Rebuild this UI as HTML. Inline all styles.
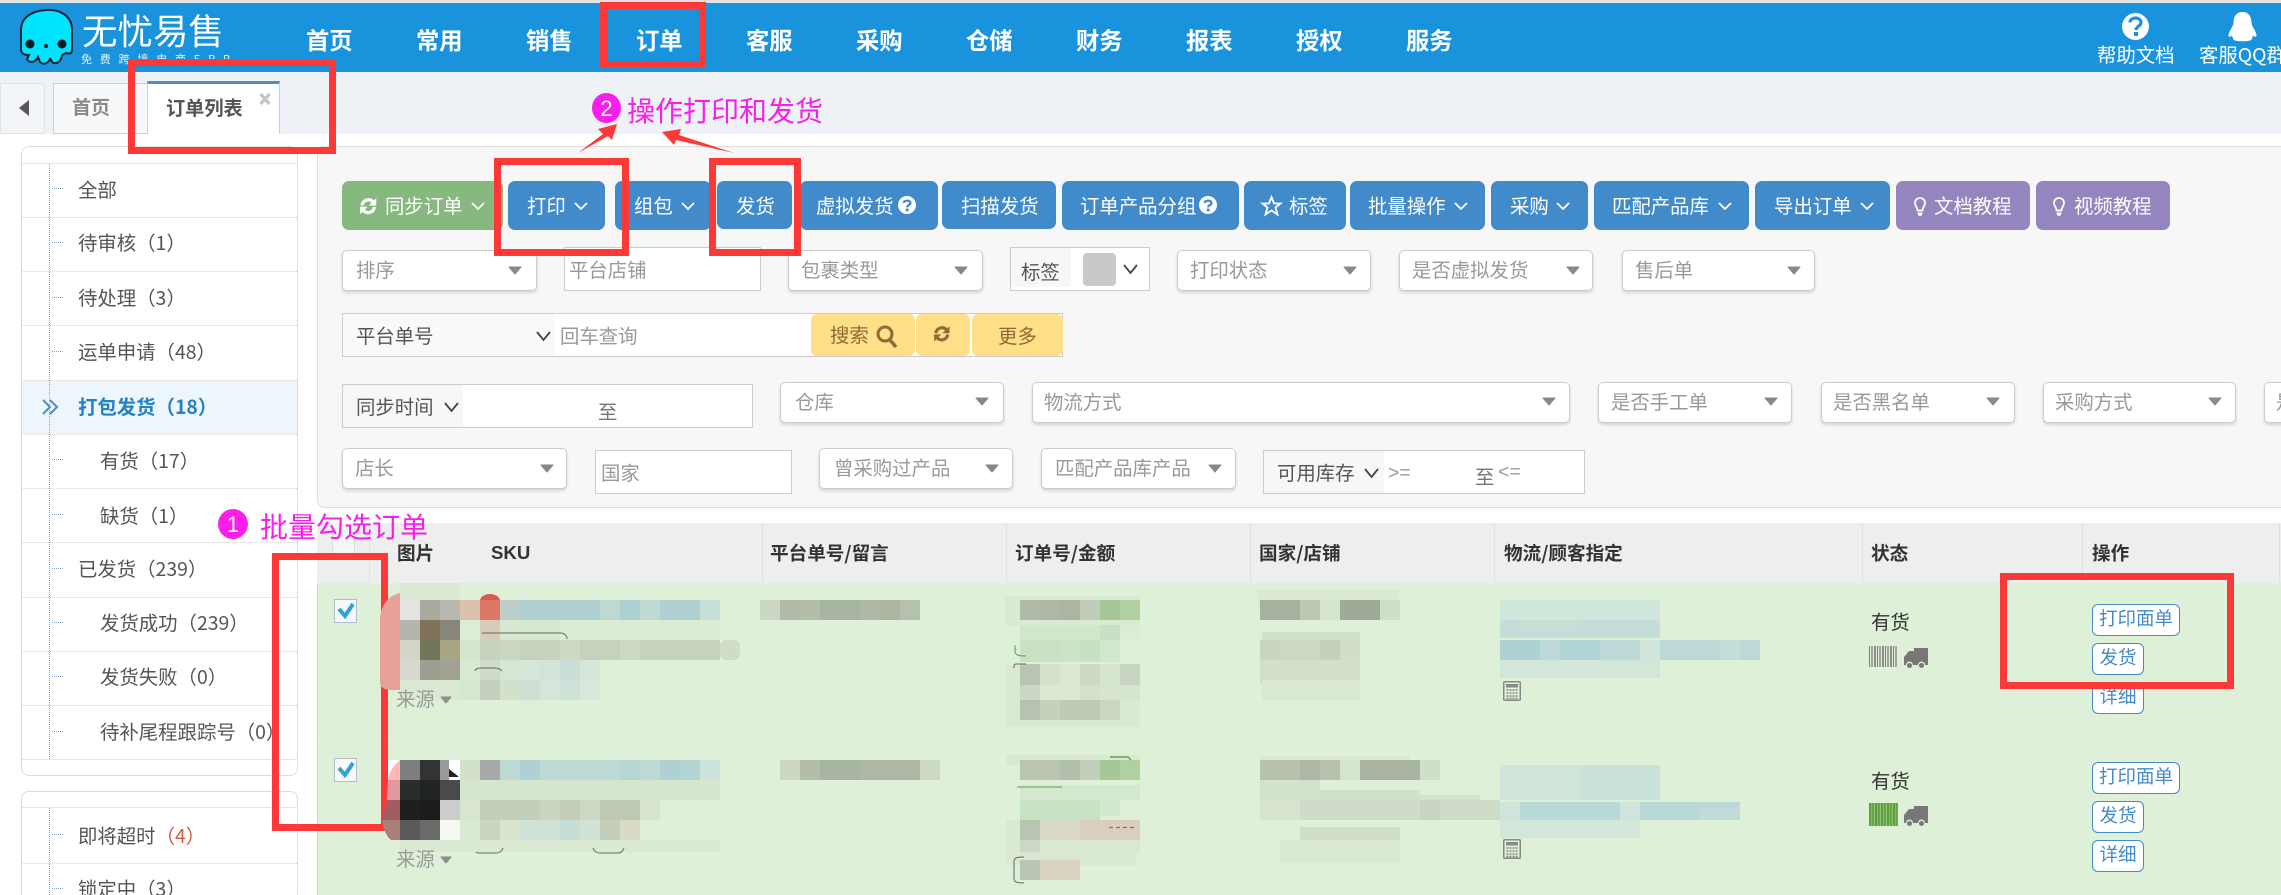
<!DOCTYPE html>
<html lang="zh-CN"><head><meta charset="utf-8"><title>订单列表</title>
<style>
html,body{margin:0;padding:0;width:2281px;height:895px;overflow:hidden;background:#fff}
body{position:relative;font-family:"Liberation Sans","Noto Sans CJK SC",sans-serif;font-size:19.4px;color:#555}
div,span{box-sizing:border-box}
.a{position:absolute}
.t{position:absolute;white-space:nowrap;line-height:20px;margin-top:-1px;font-family:"Noto Sans CJK SC","Liberation Sans",sans-serif}
.t .t{margin-top:0}
.n{position:absolute;top:26px;line-height:26px;font-size:23.3px;color:#fff;font-weight:700;font-family:"Noto Sans CJK SC",sans-serif;white-space:nowrap}
.b{position:absolute;top:181px;height:49px;border-radius:7px;background:#428bca}
.w{color:#fff;top:196px}
.s{position:absolute;height:41px;background:#fff;border:1px solid #ccc;border-radius:5px;box-shadow:0 2px 3px rgba(0,0,0,.14)}
.g{color:#999}
.i{position:absolute;background:#fff;border:1px solid #ccc}
.l{position:absolute;background:#f7f7f7}
.y{position:absolute;top:314px;height:42px;background:#ffdf87;border-radius:6px}
.br{color:#8f6a34}
.h{color:#333;font-weight:700;top:544px;font-size:18.6px}
.d{position:absolute;left:22px;width:275px;height:0;border-top:1px dotted #d2d2d2}
.sd{position:absolute;left:52px;width:11px;height:0;border-top:1px dotted #7ea8cc}
.v{position:absolute;top:523px;width:1px;height:60px;background:#e0e0e0}
.o{position:absolute;left:2092px;height:32px;width:52px;background:#fff;border:1.5px solid #428bca;border-radius:6px;color:#428bca;text-align:center;font-size:18.5px;line-height:27px;font-family:"Noto Sans CJK SC",sans-serif;white-space:nowrap}
.c{position:absolute;left:334px;width:23px;height:24px;background:#f6f8fd;border:1.5px solid #b4bccb}
</style></head><body>

<div class="a" style="left:0;top:0;width:2281px;height:3px;background:#e3e3e3"></div>
<div class="a" style="left:0;top:3px;width:2281px;height:69px;background:#1a93dd"></div>
<div class="a" style="left:0;top:72px;width:2281px;height:62px;background:#eef1f6"></div>

<span class="t" style="margin-top:0;left:82px;top:12px;font-size:35.5px;line-height:36px;color:#fff">无忧易售</span>
<span class="t" style="margin-top:0;left:81px;top:53px;font-size:11px;line-height:12px;color:#e6f4fc;letter-spacing:7.8px">免费跨境电商ERP</span>

<span class="n" style="left:306px">首页</span><span class="n" style="left:416px">常用</span><span class="n" style="left:526px">销售</span><span class="n" style="left:636px">订单</span><span class="n" style="left:746px">客服</span><span class="n" style="left:856px">采购</span><span class="n" style="left:966px">仓储</span><span class="n" style="left:1076px">财务</span><span class="n" style="left:1186px">报表</span><span class="n" style="left:1296px">授权</span><span class="n" style="left:1406px">服务</span>
<span class="t" style="left:2097px;top:45px;color:#fff">帮助文档</span>
<span class="t" style="left:2199px;top:45px;color:#fff">客服QQ群</span>

<!-- tabs -->
<div class="a" style="left:0;top:83px;width:45px;height:51px;background:#f2f4f8;border:1px solid #dfe4ec"></div>
<div class="a" style="left:53px;top:83px;width:95px;height:51px;background:#f7f8fa;border:1px solid #c5d0dc"></div>
<span class="t" style="left:72px;top:98px;color:#8a8a8a;font-weight:700;font-size:19px">首页</span>
<div class="a" style="left:147px;top:81px;width:133px;height:53px;background:#fff;border-top:3px solid #4c8fbd;border-right:1px solid #c5d0dc;border-left:1px solid #c5d0dc"></div>
<span class="t" style="left:166px;top:98px;color:#555;font-weight:700;font-size:19.2px">订单列表</span>
<svg class="a" style="left:258px;top:92px" width="14" height="14" viewBox="0 0 14 14"><path d="M2.500 2L11.500 12M11.500 2L2.500 12" stroke="#c4c4c4" stroke-width="3.200"/></svg>

<!-- sidebar -->
<div class="a" style="left:21px;top:146px;width:277px;height:630px;border:1px solid #ddd;border-radius:8px;background:#fff"></div>
<div class="a" style="left:21px;top:791px;width:277px;height:110px;border:1px solid #ddd;border-radius:8px;background:#fff"></div>
<div class="a" style="left:22px;top:163px;width:275px;height:1px;background:#e5e5e5"></div>
<div class="a" style="left:22px;top:759px;width:275px;height:1px;background:#e5e5e5"></div>
<div class="a" style="left:22px;top:807px;width:275px;height:1px;background:#e5e5e5"></div>
<div class="a" style="left:22px;top:380px;width:275px;height:54px;background:#eef6fd"></div>
<div class="a" style="left:49px;top:164px;height:595px;width:0;border-left:1px dotted #7ea8cc"></div>
<div class="a" style="left:49px;top:808px;height:87px;width:0;border-left:1px dotted #7ea8cc"></div>
<div class="d" style="top:217px"></div><div class="d" style="top:271px"></div><div class="d" style="top:325px"></div><div class="d" style="top:380px"></div><div class="d" style="top:434px"></div><div class="d" style="top:488px"></div><div class="d" style="top:542px"></div><div class="d" style="top:597px"></div><div class="d" style="top:651px"></div><div class="d" style="top:705px"></div><div class="d" style="top:863px"></div>
<div class="sd" style="top:188px"></div><div class="sd" style="top:242px"></div><div class="sd" style="top:297px"></div><div class="sd" style="top:351px"></div><div class="sd" style="top:459px"></div><div class="sd" style="top:514px"></div><div class="sd" style="top:568px"></div><div class="sd" style="top:622px"></div><div class="sd" style="top:676px"></div><div class="sd" style="top:731px"></div><div class="sd" style="top:834px"></div><div class="sd" style="top:888px"></div>

<span class="t" style="left:78px;top:180px">全部</span>
<span class="t" style="left:78px;top:233px">待审核（1）</span>
<span class="t" style="left:78px;top:288px">待处理（3）</span>
<span class="t" style="left:78px;top:342px">运单申请（48）</span>
<span class="t" style="left:78px;top:397px;color:#2283c5;font-weight:700">打包发货（18）</span>
<span class="t" style="left:100px;top:451px">有货（17）</span>
<span class="t" style="left:100px;top:506px">缺货（1）</span>
<span class="t" style="left:78px;top:559px">已发货（239）</span>
<span class="t" style="left:100px;top:613px">发货成功（239）</span>
<span class="t" style="left:100px;top:667px">发货失败（0）</span>
<span class="t" style="left:100px;top:722px">待补尾程跟踪号（0）</span>
<span class="t" style="left:78px;top:826px">即将超时<span style="color:#d15b47">（4）</span></span>
<span class="t" style="left:78px;top:879px">锁定中（3）</span>

<!-- main panel -->
<div class="a" style="left:317px;top:146px;width:1970px;height:362px;background:#f7f7f7;border:1px solid #ddd;border-radius:6px 0 0 8px"></div>

<!-- toolbar -->
<div class="b" style="left:342px;width:161px;background:#87b87f"></div>
<div class="b" style="left:508px;width:97px"></div>
<div class="b" style="left:615px;width:96px"></div>
<div class="b" style="left:717px;width:75px;height:48px"></div>
<div class="b" style="left:800px;width:138px"></div>
<div class="b" style="left:942px;width:114px;height:48px"></div>
<div class="b" style="left:1062px;width:177px"></div>
<div class="b" style="left:1244px;width:102px"></div>
<div class="b" style="left:1350px;width:135px"></div>
<div class="b" style="left:1491px;width:97px"></div>
<div class="b" style="left:1594px;width:155px"></div>
<div class="b" style="left:1755px;width:135px"></div>
<div class="b" style="left:1896px;width:134px;background:#9585bf"></div>
<div class="b" style="left:2036px;width:134px;background:#9585bf"></div>
<span class="t w" style="left:385px">同步订单</span>
<span class="t w" style="left:527px">打印</span>
<span class="t w" style="left:634px">组包</span>
<span class="t w" style="left:736px">发货</span>
<span class="t w" style="left:816px">虚拟发货</span>
<span class="t w" style="left:961px">扫描发货</span>
<span class="t w" style="left:1080px">订单产品分组</span>
<span class="t w" style="left:1289px">标签</span>
<span class="t w" style="left:1368px">批量操作</span>
<span class="t w" style="left:1510px">采购</span>
<span class="t w" style="left:1612px">匹配产品库</span>
<span class="t w" style="left:1774px">导出订单</span>
<span class="t w" style="left:1934px">文档教程</span>
<span class="t w" style="left:2074px">视频教程</span>

<!-- filters row 2 -->
<div class="s" style="left:342px;top:250px;width:195px"></div><span class="t g" style="left:356px;top:260px">排序</span>
<div class="i" style="left:564px;top:247px;width:197px;height:44px"></div><span class="t g" style="left:569px;top:260px">平台店铺</span>
<div class="s" style="left:788px;top:250px;width:195px"></div><span class="t g" style="left:801px;top:260px">包裹类型</span>
<div class="i" style="left:1010px;top:247px;width:140px;height:44px"></div><div class="l" style="left:1011px;top:248px;width:60px;height:39px"></div><span class="t" style="left:1021px;top:262px">标签</span>
<div class="a" style="left:1083px;top:253px;width:33px;height:33px;background:#c9c9c9;border-radius:4px"></div>
<div class="s" style="left:1177px;top:250px;width:194px"></div><span class="t g" style="left:1190px;top:260px">打印状态</span>
<div class="s" style="left:1399px;top:250px;width:194px"></div><span class="t g" style="left:1412px;top:260px">是否虚拟发货</span>
<div class="s" style="left:1622px;top:250px;width:193px"></div><span class="t g" style="left:1635px;top:260px">售后单</span>

<!-- search row -->
<div class="i" style="left:342px;top:313px;width:721px;height:44px"></div>
<div class="a" style="left:343px;top:314px;width:212px;height:42px;background:#f9f9f9"></div>
<span class="t" style="left:356px;top:326px">平台单号</span>
<span class="t g" style="left:560px;top:326px">回车查询</span>
<div class="y" style="left:811px;width:104px"></div><div class="y" style="left:916px;width:54px"></div><div class="y" style="left:972px;width:91px"></div>
<span class="t br" style="left:830px;top:325px">搜索</span><span class="t br" style="left:998px;top:326px">更多</span>

<!-- row 4 -->
<div class="i" style="left:342px;top:384px;width:411px;height:44px"></div><div class="l" style="left:343px;top:385px;width:120px;height:42px"></div>
<span class="t" style="left:356px;top:397px">同步时间</span><span class="t" style="left:598px;top:402px;color:#777">至</span>
<div class="s" style="left:780px;top:382px;width:224px"></div><span class="t g" style="left:795px;top:392px">仓库</span>
<div class="s" style="left:1032px;top:382px;width:538px"></div><span class="t g" style="left:1044px;top:392px">物流方式</span>
<div class="s" style="left:1598px;top:382px;width:194px"></div><span class="t g" style="left:1611px;top:392px">是否手工单</span>
<div class="s" style="left:1821px;top:382px;width:194px"></div><span class="t g" style="left:1833px;top:392px">是否黑名单</span>
<div class="s" style="left:2043px;top:382px;width:193px"></div><span class="t g" style="left:2055px;top:392px">采购方式</span>
<div class="s" style="left:2264px;top:382px;width:60px"></div><span class="t g" style="left:2276px;top:392px">是</span>

<!-- row 5 -->
<div class="s" style="left:342px;top:448px;width:225px"></div><span class="t g" style="left:355px;top:458px">店长</span>
<div class="i" style="left:595px;top:450px;width:197px;height:44px"></div><span class="t g" style="left:601px;top:463px">国家</span>
<div class="s" style="left:819px;top:448px;width:194px"></div><span class="t g" style="left:834px;top:458px">曾采购过产品</span>
<div class="s" style="left:1041px;top:448px;width:195px"></div><span class="t g" style="left:1055px;top:458px">匹配产品库产品</span>
<div class="i" style="left:1263px;top:450px;width:322px;height:44px"></div><div class="l" style="left:1264px;top:451px;width:120px;height:42px"></div>
<span class="t" style="left:1277px;top:463px">可用库存</span><span class="t g" style="left:1388px;top:464px;font-family:'Liberation Sans',sans-serif">&gt;=</span><span class="t" style="left:1475px;top:467px;color:#777">至</span><span class="t g" style="left:1498px;top:463px;font-family:'Liberation Sans',sans-serif">&lt;=</span>

<!-- table -->
<div class="a" style="left:317px;top:523px;width:1964px;height:60px;background:#eee"></div>
<div class="a" style="left:317px;top:583px;width:1964px;height:312px;background:#dff0d8;border-left:1px solid #d0dcc8"></div>
<div class="a" style="left:318px;top:741px;width:1963px;height:1px;background:#e9f1e4"></div>
<div class="a" style="left:332px;top:523px;width:23px;height:36px;background:#f6f6f6;border-left:1px solid #ddd;border-right:1px solid #ddd"></div>
<div class="v" style="left:369px"></div><div class="v" style="left:762px"></div><div class="v" style="left:1006px"></div><div class="v" style="left:1250px"></div><div class="v" style="left:1494px"></div><div class="v" style="left:1862px"></div><div class="v" style="left:2082px"></div><div class="v" style="left:2279px"></div>
<span class="t h" style="left:397px">图片</span><span class="t h" style="left:491px;font-family:'Liberation Sans',sans-serif">SKU</span><span class="t h" style="left:770px">平台单号/留言</span><span class="t h" style="left:1015px">订单号/金额</span><span class="t h" style="left:1259px">国家/店铺</span><span class="t h" style="left:1504px">物流/顾客指定</span><span class="t h" style="left:1871px">状态</span><span class="t h" style="left:2092px">操作</span>

<div class="c" style="top:599px"></div><div class="c" style="top:758px"></div>

<!-- mosaic + icons -->
<svg class="a" style="left:0;top:0" width="2281" height="895" viewBox="0 0 2281 895">
<defs>
<g id="rf"><path d="M2.6 7.4A5.6 5.6 0 0 1 12.2 4.2" fill="none" stroke="currentColor" stroke-width="2.8"/><path d="M15 1V7.5H8.5z" fill="currentColor"/><path d="M13.4 8.6A5.6 5.6 0 0 1 3.8 11.8" fill="none" stroke="currentColor" stroke-width="2.8"/><path d="M1 15V8.5H7.5z" fill="currentColor"/></g>
<path id="tri" d="M0 0H12L6 7z" fill="#888" stroke="#888" stroke-linejoin="round"/>
<path id="chw" d="M0 0L6 6L12 0" fill="none" stroke="#fff" stroke-width="1.8"/>
<path id="chd" d="M0 0L6.500 8L13 0" fill="none" stroke="#444" stroke-width="1.8"/>
<g id="qm"><circle cx="9" cy="9" r="9" fill="#fff"/><path d="M5.800 7C5.800 3.800 12.400 3.800 12.400 7C12.400 9.200 9.200 9 9.200 11.400" fill="none" stroke="#428bca" stroke-width="2.300"/><rect x="7.800" y="12.600" width="2.800" height="2.700" fill="#428bca"/></g>
<g id="bulb"><path d="M6 1C2.800 1 1 3.400 1 6C1 8.800 3.400 10 3.600 13.500H8.400C8.600 10 11 8.800 11 6C11 3.400 9.200 1 6 1Z" fill="none" stroke="#fff" stroke-width="1.800"/><path d="M3.600 15.500H8.400V17L6.800 19H5.200L3.600 17Z" fill="#fff"/></g>
<g id="truck"><path d="M10 0H24V17H21A3.500 3.500 0 0 0 14 17H9A3.500 3.500 0 0 0 2 17H0V9L5 3H10Z" fill="#777"/><circle cx="5.500" cy="17.500" r="2.500" fill="#777"/><circle cx="17.500" cy="17.500" r="2.500" fill="#777"/></g>
<g id="calc"><rect x=".75" y=".75" width="16.500" height="18.500" rx="1" fill="none" stroke="#888" stroke-width="1.500"/><rect x="3" y="3" width="12" height="3.500" fill="#888"/><path d="M3.500 9H14.500M3.500 12H14.500M3.500 15H14.500M3.500 17.500H14.500" stroke="#888" stroke-width="1.500" stroke-dasharray="2 1"/></g>
</defs>

<!-- logo -->
<path d="M46 10C60 9 71 16 72 28L72 50C72 54 69 54 66 53L62 55C61 62 56 65 52 62L50 58C50 62 44 66 40 62L38 57C36 62 29 64 27 59L29 55C24 55 22 54 21 50L21 30C21 18 31 11 46 10Z" fill="#00e4ff" stroke="#1a2530" stroke-width="2"/>
<circle cx="30" cy="44" r="4.500" fill="#0c1a22"/><circle cx="62" cy="44" r="4.500" fill="#0c1a22"/><circle cx="46" cy="46" r="2" fill="#0c1a22"/>

<!-- header icons -->
<circle cx="2135.500" cy="26.500" r="13.500" fill="#fff"/><path d="M2130 22.500C2130 16.500 2141 16.500 2141 22.500C2141 26.500 2136 26 2136 30" fill="none" stroke="#1a93dd" stroke-width="3.200"/><rect x="2134" y="32" width="4" height="4" fill="#1a93dd"/>
<path d="M2242.500 12C2236 12 2233.500 17 2233.500 23C2233.500 26 2229 31 2228.500 35C2228.300 37 2230 37.500 2232 35.500C2233 38.500 2233 40 2235 40.500C2239 41.500 2246 41.500 2250 40.500C2252 40 2252 38.500 2253 35.500C2255 37.500 2256.700 37 2256.500 35C2256 31 2251.500 26 2251.500 23C2251.500 17 2249 12 2242.500 12Z" fill="#fff"/>

<!-- tab arrow -->
<path d="M29 100V116L19 108Z" fill="#555"/>

<!-- double chevrons -->
<path d="M43 400L50 407L43 414M50 400L57 407L50 414" fill="none" stroke="#4c8fbd" stroke-width="2"/>

<!-- toolbar icons -->
<use href="#rf" x="0" y="0" transform="translate(359 197) scale(1.150)" color="#fff"/>
<use href="#chw" x="472" y="203"/><use href="#chw" x="575" y="203"/><use href="#chw" x="682" y="203"/>
<use href="#qm" x="898" y="196"/><use href="#qm" x="1199" y="196"/>
<path d="M1271.500 197L1274 203.500H1280.500L1275.500 207.500L1277.500 214.500L1271.500 210.500L1265.500 214.500L1267.500 207.500L1262.500 203.500H1269Z" fill="none" stroke="#fff" stroke-width="1.800"/>
<use href="#chw" x="1455" y="203"/><use href="#chw" x="1557" y="203"/><use href="#chw" x="1719" y="203"/><use href="#chw" x="1861" y="203"/>
<use href="#bulb" x="1914" y="197"/><use href="#bulb" x="2053" y="197"/>

<!-- select triangles -->
<use href="#tri" x="509" y="267"/><use href="#tri" x="955" y="267"/><use href="#tri" x="1344" y="267"/><use href="#tri" x="1567" y="267"/><use href="#tri" x="1788" y="267"/>
<use href="#tri" x="976" y="398"/><use href="#tri" x="1543" y="398"/><use href="#tri" x="1765" y="398"/><use href="#tri" x="1987" y="398"/><use href="#tri" x="2209" y="398"/>
<use href="#tri" x="541" y="465"/><use href="#tri" x="986" y="465"/><use href="#tri" x="1209" y="465"/>
<use href="#chd" x="1124" y="265"/><use href="#chd" x="537" y="332"/><use href="#chd" x="445" y="403"/><use href="#chd" x="1365" y="469"/>

<!-- search icons -->
<circle cx="885" cy="334" r="7" fill="none" stroke="#8f6a34" stroke-width="3"/><path d="M890 340L896 347" stroke="#8f6a34" stroke-width="3.500"/>
<use href="#rf" transform="translate(933 325) scale(1.100)" color="#8f6a34"/>

<g shape-rendering="crispEdges">
<!-- pale blurred patches -->
<g fill="#d9e9d2"><rect x="400" y="583" width="60" height="20"/><rect x="400" y="680" width="70" height="20"/><rect x="1005" y="596" width="135" height="30"/><rect x="1006" y="665" width="134" height="62"/><rect x="1258" y="590" width="140" height="18"/><rect x="400" y="840" width="320" height="12"/><rect x="1260" y="756" width="150" height="8"/><rect x="1006" y="755" width="134" height="10"/><rect x="1006" y="820" width="130" height="45"/></g>

<!-- SKU row 1 -->
<g fill="#aed0d0"><rect x="520" y="600" width="200" height="20"/></g>
<rect x="500" y="600" width="20" height="20" fill="#bccec7"/><rect x="600" y="600" width="20" height="20" fill="#c0d9d0"/><rect x="620" y="600" width="20" height="20" fill="#add1d2"/><rect x="640" y="600" width="20" height="20" fill="#bfdad2"/><rect x="700" y="600" width="20" height="20" fill="#c6e0d5"/>
<rect x="400" y="600" width="20" height="20" fill="#e3e3df"/><rect x="420" y="600" width="20" height="20" fill="#a9a9a0"/><rect x="440" y="600" width="20" height="20" fill="#b8b8b0"/><rect x="460" y="600" width="20" height="20" fill="#dcc2ac"/><rect x="480" y="600" width="20" height="20" fill="#df7767"/>
<rect x="400" y="620" width="20" height="20" fill="#b5b5ae"/><rect x="420" y="620" width="20" height="20" fill="#80735a"/><rect x="440" y="620" width="20" height="20" fill="#88887a"/><rect x="460" y="620" width="20" height="20" fill="#dbeed5"/><rect x="480" y="620" width="20" height="20" fill="#d5cdb6"/><rect x="500" y="620" width="60" height="20" fill="#d8e7d0"/><rect x="560" y="620" width="160" height="20" fill="#dcecd4"/>
<rect x="400" y="640" width="20" height="20" fill="#d3d3c8"/><rect x="420" y="640" width="20" height="20" fill="#72765a"/><rect x="440" y="640" width="20" height="20" fill="#a9a583"/><rect x="460" y="640" width="20" height="20" fill="#d5e4cd"/><rect x="480" y="640" width="240" height="20" fill="#c6d1be"/><rect x="500" y="640" width="20" height="20" fill="#cbd6c2"/><rect x="560" y="640" width="20" height="20" fill="#ced9c5"/><rect x="620" y="640" width="20" height="20" fill="#ced9c5"/><rect x="720" y="640" width="20" height="20" rx="6" fill="#d0dcc8"/>
<rect x="400" y="660" width="20" height="20" fill="#d7d9cf"/><rect x="420" y="660" width="20" height="20" fill="#9c9e90"/><rect x="440" y="660" width="20" height="20" fill="#a1a292"/><rect x="460" y="660" width="20" height="20" fill="#d8e8d3"/><rect x="480" y="660" width="20" height="20" fill="#cddcc8"/><rect x="500" y="660" width="20" height="20" fill="#d5e6d3"/><rect x="520" y="660" width="20" height="20" fill="#d5e7d8"/><rect x="540" y="660" width="20" height="20" fill="#d2e4d9"/><rect x="560" y="660" width="20" height="20" fill="#c8e0d8"/><rect x="580" y="660" width="20" height="20" fill="#d6e7da"/>
<rect x="460" y="680" width="20" height="20" fill="#d6e7d0"/><rect x="480" y="680" width="20" height="20" fill="#c4cfbd"/><rect x="500" y="680" width="20" height="20" fill="#d3e0cc"/><rect x="520" y="680" width="20" height="20" fill="#cfdfd3"/><rect x="540" y="680" width="20" height="20" fill="#d5e6d8"/><rect x="560" y="680" width="20" height="20" fill="#cfe2d8"/><rect x="580" y="680" width="20" height="20" fill="#d8e9da"/>

<!-- platform row 1 -->
<rect x="760" y="600" width="20" height="20" fill="#ccd6c4"/><rect x="780" y="600" width="20" height="20" fill="#b0bba9"/><rect x="800" y="600" width="20" height="20" fill="#b3bdaa"/><rect x="820" y="600" width="40" height="20" fill="#a9b5a3"/><rect x="860" y="600" width="20" height="20" fill="#afb9a8"/><rect x="880" y="600" width="20" height="20" fill="#aab5a2"/><rect x="900" y="600" width="20" height="20" fill="#b5c0ae"/>

<!-- order row 1 -->
<rect x="1020" y="600" width="20" height="20" fill="#b0baa8"/><rect x="1040" y="600" width="20" height="20" fill="#adb7a5"/><rect x="1060" y="600" width="20" height="20" fill="#aab5a3"/><rect x="1080" y="600" width="20" height="20" fill="#c2cdb9"/><rect x="1100" y="600" width="20" height="20" fill="#a5c896"/><rect x="1120" y="600" width="20" height="20" fill="#b0d19f"/>
<rect x="1020" y="625" width="80" height="15" fill="#d0e7ca"/><rect x="1100" y="625" width="20" height="15" fill="#c8e0c4"/><rect x="1120" y="625" width="20" height="15" fill="#dbeed5"/>
<rect x="1020" y="640" width="40" height="22" fill="#c9e2c3"/><rect x="1060" y="640" width="20" height="22" fill="#cbe4c5"/><rect x="1080" y="640" width="20" height="22" fill="#c6e2c2"/><rect x="1100" y="640" width="20" height="22" fill="#d0e8cb"/>
<rect x="1020" y="664" width="20" height="21" fill="#b9c5b3"/><rect x="1040" y="664" width="20" height="21" fill="#d5e2cc"/><rect x="1060" y="664" width="20" height="21" fill="#dae8d1"/><rect x="1080" y="664" width="20" height="21" fill="#ccd9c3"/><rect x="1100" y="664" width="20" height="21" fill="#d6e5cf"/><rect x="1120" y="664" width="20" height="21" fill="#c8d5c2"/>
<rect x="1020" y="685" width="20" height="15" fill="#c9d7c3"/><rect x="1040" y="685" width="40" height="15" fill="#dbe9d3"/><rect x="1080" y="685" width="20" height="15" fill="#d3e2cc"/><rect x="1100" y="685" width="40" height="15" fill="#d6e5cf"/>
<rect x="1020" y="700" width="20" height="20" fill="#b7c3b1"/><rect x="1040" y="700" width="20" height="20" fill="#c5d0bd"/><rect x="1060" y="700" width="40" height="20" fill="#bec9b6"/><rect x="1100" y="700" width="20" height="20" fill="#cbd6c2"/>

<!-- country row 1 -->
<rect x="1260" y="600" width="40" height="20" fill="#a7b1a0"/><rect x="1300" y="600" width="20" height="20" fill="#bcc8b2"/><rect x="1320" y="600" width="20" height="20" fill="#d4e4cf"/><rect x="1340" y="600" width="40" height="20" fill="#a0aa98"/><rect x="1380" y="600" width="20" height="20" fill="#cfdfca"/>
<rect x="1262" y="632" width="98" height="18" fill="#d3e0ca"/><rect x="1260" y="640" width="20" height="20" fill="#c9d5c1"/><rect x="1280" y="640" width="40" height="20" fill="#cdd9c4"/><rect x="1320" y="640" width="20" height="20" fill="#c5d1bd"/><rect x="1340" y="640" width="20" height="20" fill="#d1dec9"/>
<rect x="1260" y="660" width="100" height="25" fill="#d2e0cb"/><rect x="1262" y="680" width="98" height="20" fill="#d9e8d3"/>

<!-- logistics row 1 -->
<rect x="1500" y="600" width="160" height="20" fill="#d0e6da"/><rect x="1500" y="620" width="160" height="18" fill="#c3ded8"/><rect x="1520" y="620" width="60" height="10" fill="#c6e0d8"/>
<rect x="1500" y="640" width="260" height="20" fill="#bcd9d7"/><rect x="1500" y="640" width="40" height="20" fill="#aed2d4"/><rect x="1560" y="640" width="40" height="20" fill="#b1d4d4"/><rect x="1640" y="640" width="20" height="20" fill="#d0e6da"/><rect x="1720" y="640" width="20" height="20" fill="#c3ded8"/>
<rect x="1500" y="660" width="160" height="18" fill="#d3e6da"/>

<!-- SKU row 2 -->
<rect x="460" y="760" width="20" height="20" fill="#d3e0cb"/><rect x="480" y="760" width="20" height="20" fill="#a9a9a9"/><rect x="500" y="760" width="220" height="20" fill="#bcd9d3"/><rect x="520" y="760" width="20" height="20" fill="#aed2d4"/><rect x="620" y="760" width="20" height="20" fill="#b6d6d4"/><rect x="660" y="760" width="20" height="20" fill="#aed2d4"/><rect x="680" y="760" width="20" height="20" fill="#b3d6d4"/><rect x="700" y="760" width="20" height="20" fill="#cce4d9"/>
<rect x="400" y="760" width="20" height="20" fill="#7e7e7e"/><rect x="420" y="760" width="20" height="20" fill="#333"/><rect x="440" y="760" width="20" height="20" fill="#999"/>
<rect x="449" y="760" width="11" height="20" fill="#fff"/><path d="M449 769L459 777H449Z" fill="#222"/>
<rect x="400" y="780" width="20" height="20" fill="#2a2d2e"/><rect x="420" y="780" width="20" height="20" fill="#222324"/><rect x="440" y="780" width="20" height="20" fill="#4a4a48"/><rect x="460" y="780" width="260" height="20" fill="#d6e5ce"/>
<rect x="400" y="800" width="20" height="20" fill="#1e1f20"/><rect x="420" y="800" width="20" height="20" fill="#1c1c1d"/><rect x="440" y="800" width="20" height="20" fill="#ccc"/><rect x="460" y="800" width="20" height="20" fill="#d8e6d1"/><rect x="480" y="800" width="60" height="20" fill="#c3cebb"/><rect x="540" y="800" width="20" height="20" fill="#cad5c1"/><rect x="560" y="800" width="20" height="20" fill="#c3cebb"/><rect x="580" y="800" width="20" height="20" fill="#cdd8c4"/><rect x="600" y="800" width="40" height="20" fill="#bec9b5"/><rect x="640" y="800" width="20" height="20" fill="#d6e4ce"/>
<rect x="400" y="820" width="20" height="20" fill="#5a5b58"/><rect x="420" y="820" width="20" height="20" fill="#6a6b68"/><rect x="440" y="820" width="20" height="20" fill="#f3f8f0"/><rect x="460" y="820" width="20" height="20" fill="#d8e8d1"/><rect x="480" y="820" width="20" height="20" fill="#c8d5c0"/><rect x="500" y="820" width="20" height="20" fill="#d8e5ce"/><rect x="520" y="820" width="40" height="20" fill="#cfe2d7"/><rect x="560" y="820" width="20" height="20" fill="#c5dfd7"/><rect x="580" y="820" width="20" height="20" fill="#d0e2d6"/><rect x="600" y="820" width="20" height="20" fill="#c4cfbb"/><rect x="620" y="820" width="20" height="20" fill="#d9dcc4"/>

<!-- platform row 2 -->
<rect x="780" y="760" width="20" height="20" fill="#cbd6c3"/><rect x="800" y="760" width="20" height="20" fill="#b3bdaa"/><rect x="820" y="760" width="40" height="20" fill="#a9b5a3"/><rect x="860" y="760" width="60" height="20" fill="#adb8a6"/><rect x="920" y="760" width="20" height="20" fill="#cdd8c5"/>

<!-- order row 2 -->
<rect x="1020" y="760" width="60" height="20" fill="#bac5b1"/><rect x="1080" y="760" width="20" height="20" fill="#c4cfbb"/><rect x="1060" y="760" width="20" height="20" fill="#b4c0ae"/><rect x="1100" y="760" width="20" height="20" fill="#a5c896"/><rect x="1120" y="760" width="20" height="20" fill="#b0d19f"/>
<rect x="1020" y="785" width="120" height="15" fill="#d3e8cd"/><rect x="1020" y="800" width="80" height="20" fill="#c8e2c4"/><rect x="1100" y="800" width="20" height="16" fill="#d0e8cb"/>
<rect x="1020" y="820" width="20" height="20" fill="#b9c5b3"/><rect x="1040" y="820" width="40" height="20" fill="#dad8c6"/><rect x="1080" y="820" width="60" height="20" fill="#d8cfbe"/>
<rect x="1020" y="840" width="20" height="14" fill="#ccd8c7"/><rect x="1040" y="840" width="100" height="14" fill="#d8e8d2"/>
<rect x="1020" y="860" width="20" height="20" fill="#b8c5b5"/><rect x="1040" y="860" width="40" height="20" fill="#dad3bf"/>
<rect x="1020" y="852" width="60" height="8" fill="#d8e8d2"/>

<!-- country row 2 -->
<rect x="1260" y="760" width="40" height="20" fill="#b7c2ae"/><rect x="1300" y="760" width="20" height="20" fill="#adb7a5"/><rect x="1320" y="760" width="20" height="20" fill="#b7c2ae"/><rect x="1340" y="760" width="20" height="20" fill="#d4e4cf"/><rect x="1360" y="760" width="60" height="20" fill="#a9b3a1"/><rect x="1420" y="760" width="20" height="20" fill="#cfdfca"/>
<rect x="1260" y="780" width="60" height="20" fill="#d3e2cc"/><rect x="1260" y="800" width="240" height="20" fill="#cfdcc9"/><rect x="1320" y="790" width="100" height="10" fill="#d3e0cb"/><rect x="1420" y="795" width="60" height="5" fill="#d5e2cc"/><rect x="1260" y="800" width="40" height="20" fill="#d6e3cf"/><rect x="1420" y="800" width="20" height="20" fill="#c8d5c2"/>
<rect x="1300" y="827" width="100" height="13" fill="#d0ddc9"/><rect x="1280" y="840" width="120" height="23" fill="#dae9d4"/>

<!-- logistics row 2 -->
<rect x="1500" y="765" width="160" height="35" fill="#d0e5da"/><rect x="1580" y="765" width="80" height="35" fill="#c9e2da"/>
<rect x="1500" y="802" width="240" height="18" fill="#b9d9d8"/><rect x="1500" y="802" width="20" height="18" fill="#cfe4da"/><rect x="1620" y="802" width="20" height="18" fill="#cfe4da"/><rect x="1700" y="807" width="40" height="13" fill="#c0dcd9"/>
<rect x="1500" y="820" width="140" height="18" fill="#d3e6da"/>
</g>

<path d="M480 600C482 592 498 592 500 600Z" fill="#df5a48"/>

<!-- fine outline traces -->
<path d="M482 633H560C565 633 567 636 567 639" fill="none" stroke="#666" stroke-width="1"/>
<path d="M475 671C475 669 478 668 480 668H495C498 668 500 669 502 671" fill="none" stroke="#666" stroke-width="1"/>
<path d="M476 852C476 853 478 853 480 853H496C500 853 502 851 503 848M593 848C594 851 596 853 600 853H618C622 853 623 850 624 848" fill="none" stroke="#666" stroke-width="1"/>
<path d="M1016 650V649M1015 645V651C1015 655 1018 656 1026 656" fill="none" stroke="#5ba54a" stroke-width="1"/>
<path d="M1026 664H1016C1014 664 1014 666 1014 668" fill="none" stroke="#666" stroke-width="1"/>
<path d="M1017 787H1062" stroke="#5ba54a" stroke-width="1"/><path d="M1110 757H1128L1131 760" fill="none" stroke="#5ba54a" stroke-width="1.500"/>
<path d="M1024 857C1016 857 1014 858 1014 862V878C1014 882 1016 883 1024 883" fill="none" stroke="#666" stroke-width="1"/>
<path d="M1109 827.500H1134" stroke="#f0433b" stroke-width="1.300" stroke-dasharray="4 3"/>

<!-- checks -->
<path d="M339 609L345 616L353 604" fill="none" stroke="#32a3ce" stroke-width="4"/>
<path d="M339 768L345 775L353 763" fill="none" stroke="#32a3ce" stroke-width="4"/>
<!-- 来源 arrows -->
<path d="M441 697H451L446 703Z" fill="#8e8e8e" stroke="#8e8e8e" stroke-linejoin="round"/>
<path d="M441 857H451L446 863Z" fill="#8e8e8e" stroke="#8e8e8e" stroke-linejoin="round"/>
<!-- calculators -->
<use href="#calc" x="1503" y="681"/><use href="#calc" x="1503" y="839"/>
<!-- trucks -->
<use href="#truck" x="1904" y="648"/><use href="#truck" x="1904" y="806"/>
</svg>

<span class="t" style="left:396px;top:689px;color:#999">来源</span>
<span class="t" style="left:396px;top:849px;color:#999">来源</span>
<span class="t" style="left:1871px;top:612px;color:#333">有货</span>
<span class="t" style="left:1871px;top:771px;color:#333">有货</span>
<div class="a" style="left:1869px;top:646px;width:28px;height:21px;background:repeating-linear-gradient(90deg,#7f897a 0 1px,#dfe8d8 1px 2px,#a0a89b 2px 4px,#e2ecdb 4px 5px,#8a9485 5px 7px,#dde6d6 7px 8px)"></div>
<div class="a" style="left:1869px;top:803px;width:29px;height:23px;background:repeating-linear-gradient(90deg,#5f9f3e 0 2px,#82b86a 2px 3px,#66a645 3px 5px,#91c27b 5px 6px)"></div>

<div class="o" style="top:604px;width:88px">打印面单</div>
<div class="o" style="top:643px">发货</div>
<div class="o" style="top:682px">详细</div>
<div class="o" style="top:762px;width:88px">打印面单</div>
<div class="o" style="top:801px">发货</div>
<div class="o" style="top:840px">详细</div>

<!-- annotations -->
<svg class="a" style="left:0;top:0" width="2281" height="895" viewBox="0 0 2281 895">
<g fill="none" stroke="#fd3838" stroke-width="7">
<rect x="603.500" y="5.500" width="99" height="59"/>
<rect x="131.500" y="62.500" width="201" height="88"/>
<rect x="497.500" y="161.500" width="128" height="91"/>
<rect x="712.500" y="161.500" width="85" height="91"/>
<rect x="275.500" y="556.500" width="109" height="271"/>
<rect x="2003.500" y="576.500" width="227" height="109"/>
</g>
<polygon points="617,124 598,129 603,134 578,153 608,136 612,140" fill="#fd3838"/>
<polygon points="662,132 681,129 679,135 734,153 676,140 674,145" fill="#fd3838"/>
<ellipse cx="606.500" cy="108" rx="14.500" ry="15" fill="#f81fea"/>
<ellipse cx="233" cy="524" rx="15" ry="15" fill="#f81fea"/>
<text x="606.500" y="116" fill="#fff" font-size="22" text-anchor="middle" font-family="Liberation Sans, sans-serif">2</text>
<text x="233" y="532" fill="#fff" font-size="22" text-anchor="middle" font-family="Liberation Sans, sans-serif">1</text>

<!-- blur strips painted over the red box, as in the reference -->
<path d="M400 593V690H392C385 690 380 688 380 682V618C381 605 388 596 400 593Z" fill="#e8a09a"/>
<rect x="388" y="760" width="12" height="20" fill="#fff"/>
<path d="M400 760V780H388C390 770 394 765 400 760Z" fill="#ffb8b5"/>
<path d="M400 780V800H387L388 780Z" fill="#e09a9c"/>
<path d="M400 800V820H382L387 800Z" fill="#a35c61"/>
<path d="M400 820V840H391C386 836 383 828 382 820Z" fill="#a88078"/>
</svg>
<span class="t" style="margin-top:0;left:627px;top:95px;font-size:28px;line-height:30px;color:#f81fea">操作打印和发货</span>
<span class="t" style="margin-top:0;left:260px;top:511px;font-size:28px;line-height:30px;color:#f81fea">批量勾选订单</span>

</body></html>
